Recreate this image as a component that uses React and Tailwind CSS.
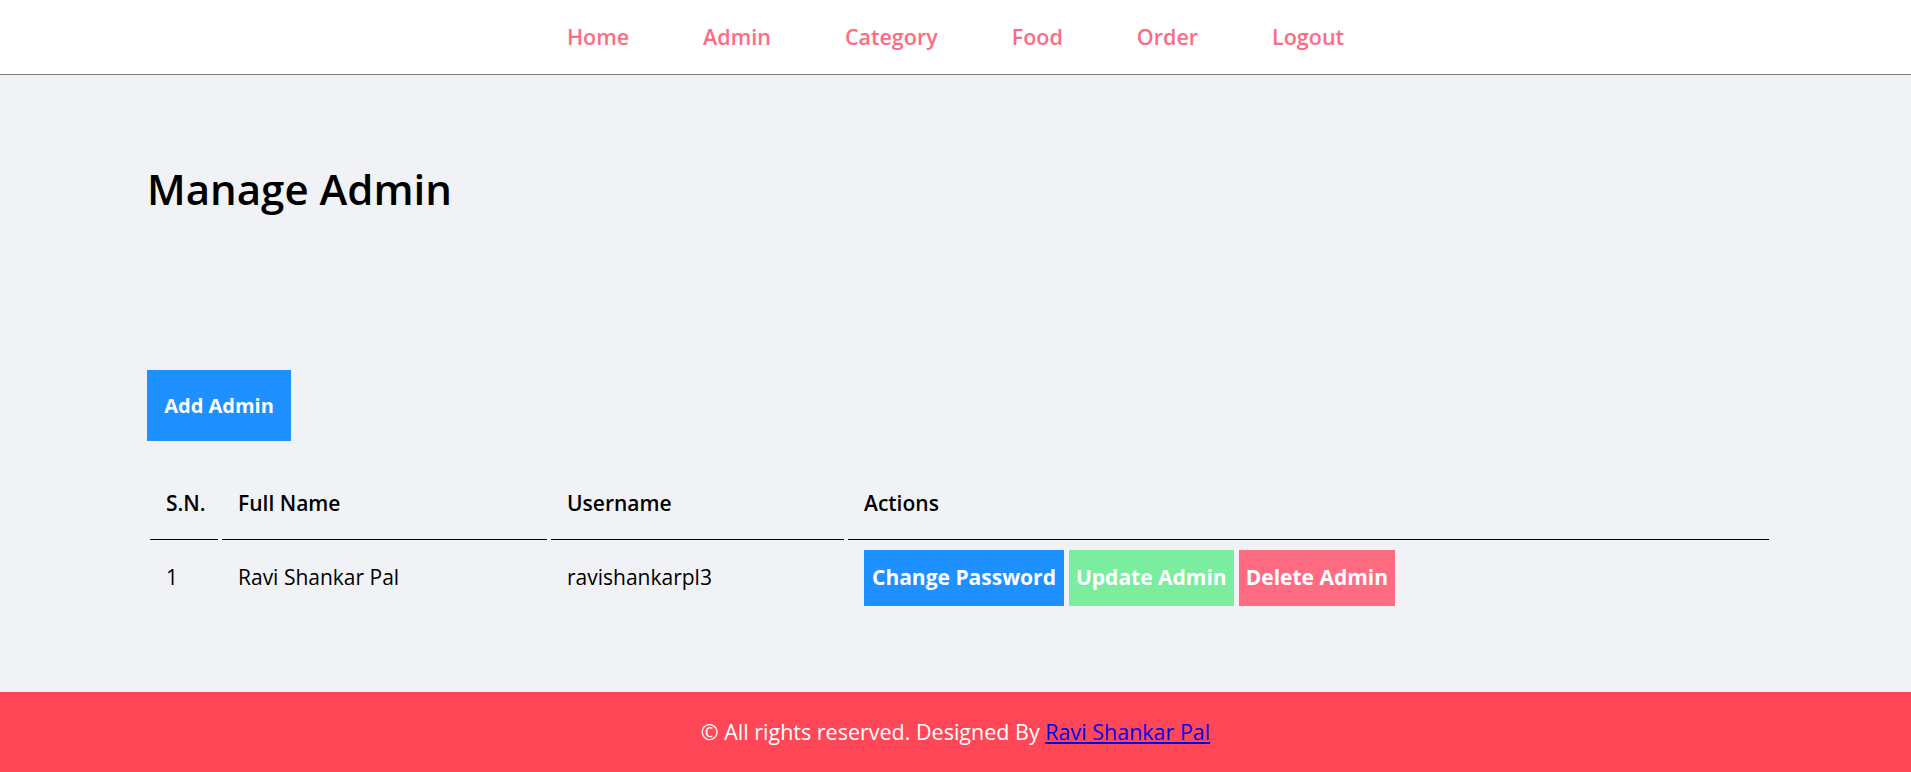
const navLinks = ["Home", "Admin", "Category", "Food", "Order", "Logout"];

const admins = [{ id: 1, fullName: "Ravi Shankar Pal", username: "ravishankarpl3" }];

export default function App() {
  return (
    <div className="min-h-screen bg-white font-['Open_Sans',sans-serif] text-black">
      {/* menu */}
      <div className="h-[75px] border-b border-[#808080] bg-white flex items-center justify-center">
        <ul className="flex items-center gap-[74px] text-[21.5px] font-semibold text-[#ff6b81]">
          {navLinks.map((link) => (
            <li key={link}>
              <a href="#">{link}</a>
            </li>
          ))}
        </ul>
      </div>

      {/* main content */}
      <div className="bg-[#f1f2f6] h-[617px]">
        <div className="ml-[147px] w-[1627px] pt-[84px]">
          <h1 className="text-[42px] leading-[60px] font-semibold">Manage Admin</h1>

          <a
            href="#"
            className="mt-[151px] inline-flex items-center justify-center w-[144px] h-[71px] bg-[#1e90ff] text-white text-[20px] font-bold"
          >
            Add Admin
          </a>

          <table className="mt-[27px] w-full table-fixed border-separate border-spacing-x-[4px] border-spacing-y-0 text-[21px] -ml-[1px]">
            <thead>
              <tr>
                <th className="w-[68px] h-[72px] border-b border-black px-[16px] text-left font-semibold">S.N.</th>
                <th className="w-[325px] border-b border-black px-[16px] text-left font-semibold">Full Name</th>
                <th className="w-[293px] border-b border-black px-[16px] text-left font-semibold">Username</th>
                <th className="border-b border-black px-[16px] text-left font-semibold">Actions</th>
              </tr>
            </thead>
            <tbody>
              {admins.map((a) => (
                <tr key={a.id}>
                  <td className="h-[76px] px-[16px]">{a.id}</td>
                  <td className="px-[16px]">{a.fullName}</td>
                  <td className="px-[16px]">{a.username}</td>
                  <td className="px-[16px]">
                    <div className="flex items-center gap-[5px] text-white font-bold">
                      <a href="#" className="h-[56px] px-[8px] flex items-center bg-[#1e90ff]">
                        Change Password
                      </a>
                      <a href="#" className="h-[56px] px-[7px] flex items-center bg-[#7bed9f]">
                        Update Admin
                      </a>
                      <a href="#" className="h-[56px] px-[7px] flex items-center bg-[#ff6b81]">
                        Delete Admin
                      </a>
                    </div>
                  </td>
                </tr>
              ))}
            </tbody>
          </table>
        </div>
      </div>

      {/* footer */}
      <div className="bg-[#ff4757] h-[80px] flex items-center justify-center text-white text-[21.5px]">
        <p>
          © All rights reserved. Designed By{" "}
          <a href="#" className="text-[#0000ee] underline">
            Ravi Shankar Pal
          </a>
        </p>
      </div>
    </div>
  );
}
